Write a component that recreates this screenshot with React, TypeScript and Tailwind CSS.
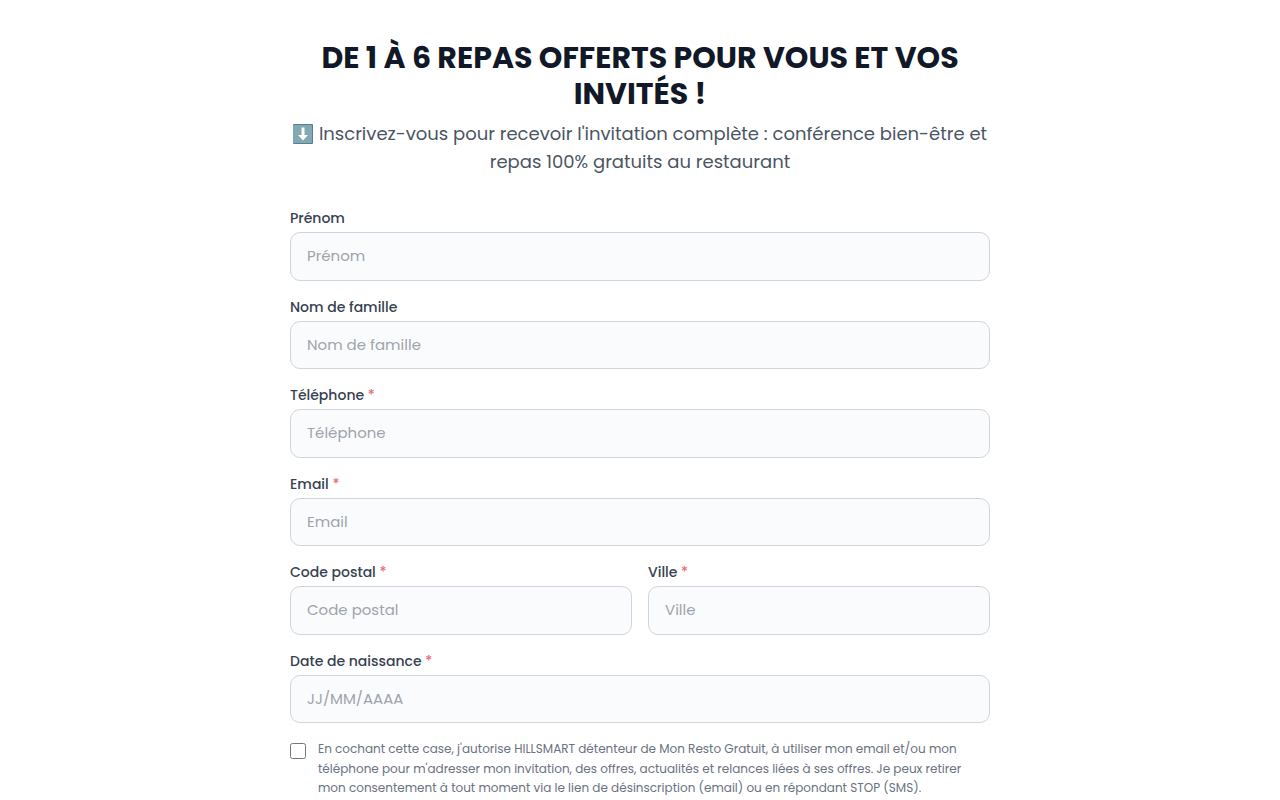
import { useState } from "react";
import type { ChangeEvent, FormEvent } from "react";

type FieldName = "firstName" | "lastName" | "phone" | "email" | "zip" | "city" | "birthDate";

interface FieldProps {
  name: FieldName;
  label: string;
  type?: string;
  placeholder?: string;
  required?: boolean;
  value: string;
  onChange: (e: ChangeEvent<HTMLInputElement>) => void;
}

// Champ de formulaire : label + input
function Field({ name, label, type = "text", placeholder, required, value, onChange }: FieldProps) {
  return (
    <div className="min-w-0 flex-1">
      <label htmlFor={name} className="mb-1 block text-sm font-medium text-[#374151]">
        {label}
        {required && <span className="text-[#ea6a7c]"> *</span>}
      </label>
      <input
        id={name}
        name={name}
        type={type}
        required={required}
        placeholder={placeholder ?? label}
        value={value}
        onChange={onChange}
        className="block w-full rounded-[10px] border border-[#d1d5db] bg-[#f9fbfd] px-4 py-3 text-[15px] leading-normal text-[#111827] outline-none placeholder:text-[#a0a4ab] focus:border-gray-500"
      />
    </div>
  );
}

// Flèche vers le bas devant le sous-titre
function ArrowDown() {
  return (
    <svg viewBox="0 0 20 20" className="mr-1.5 inline-block size-5 align-[-4px]" aria-hidden="true">
      <rect width="20" height="20" rx="1" fill="#5b7f8c" />
      <rect width="19" height="18" x="0" y="1" rx="1" fill="#82a8b4" />
      <path d="M8.5 3.5h3v7.5H15l-5 5.5L5 11h3.5z" fill="#fff" />
    </svg>
  );
}

export default function App() {
  const [values, setValues] = useState<Record<FieldName, string>>({
    firstName: "",
    lastName: "",
    phone: "",
    email: "",
    zip: "",
    city: "",
    birthDate: "",
  });
  const [consent, setConsent] = useState(false);

  const handleChange = (e: ChangeEvent<HTMLInputElement>) => {
    setValues({ ...values, [e.target.name]: e.target.value });
  };

  const handleSubmit = (e: FormEvent) => {
    e.preventDefault();
  };

  // props communes à chaque champ
  const bind = (name: FieldName) => ({ name, value: values[name], onChange: handleChange });

  return (
    <main className="min-h-screen bg-white px-4 pt-10 font-[Poppins,Inter,sans-serif]">
      <div className="mx-auto max-w-[700px]">
        <header className="mb-8 text-center">
          <h1 className="text-3xl leading-9 font-bold text-[#111827]">
            DE 1 À 6 REPAS OFFERTS POUR VOUS ET VOS INVITÉS !
          </h1>
          <p className="mt-2 text-lg leading-7 text-[#4b5563]">
            <ArrowDown />
            Inscrivez-vous pour recevoir l'invitation complète : conférence bien-être et repas 100%
            gratuits au restaurant
          </p>
        </header>

        <form onSubmit={handleSubmit} className="flex flex-col gap-4">
          <Field {...bind("firstName")} label="Prénom" />
          <Field {...bind("lastName")} label="Nom de famille" />
          <Field {...bind("phone")} label="Téléphone" type="tel" required />
          <Field {...bind("email")} label="Email" type="email" required />
          <div className="flex gap-4">
            <Field {...bind("zip")} label="Code postal" required />
            <Field {...bind("city")} label="Ville" required />
          </div>
          <Field {...bind("birthDate")} label="Date de naissance" placeholder="JJ/MM/AAAA" required />

          {/* Consentement */}
          <div className="flex items-start gap-3">
            <input
              id="consent"
              type="checkbox"
              checked={consent}
              onChange={(e) => setConsent(e.target.checked)}
              className="mt-1 size-4 shrink-0"
            />
            <label htmlFor="consent" className="text-xs leading-relaxed text-[#6b7280]">
              En cochant cette case, j'autorise HILLSMART détenteur de Mon Resto Gratuit, à utiliser mon
              email et/ou mon téléphone pour m'adresser mon invitation, des offres, actualités et
              relances liées à ses offres. Je peux retirer mon consentement à tout moment via le lien de
              désinscription (email) ou en répondant STOP (SMS).
            </label>
          </div>
        </form>
      </div>
    </main>
  );
}
